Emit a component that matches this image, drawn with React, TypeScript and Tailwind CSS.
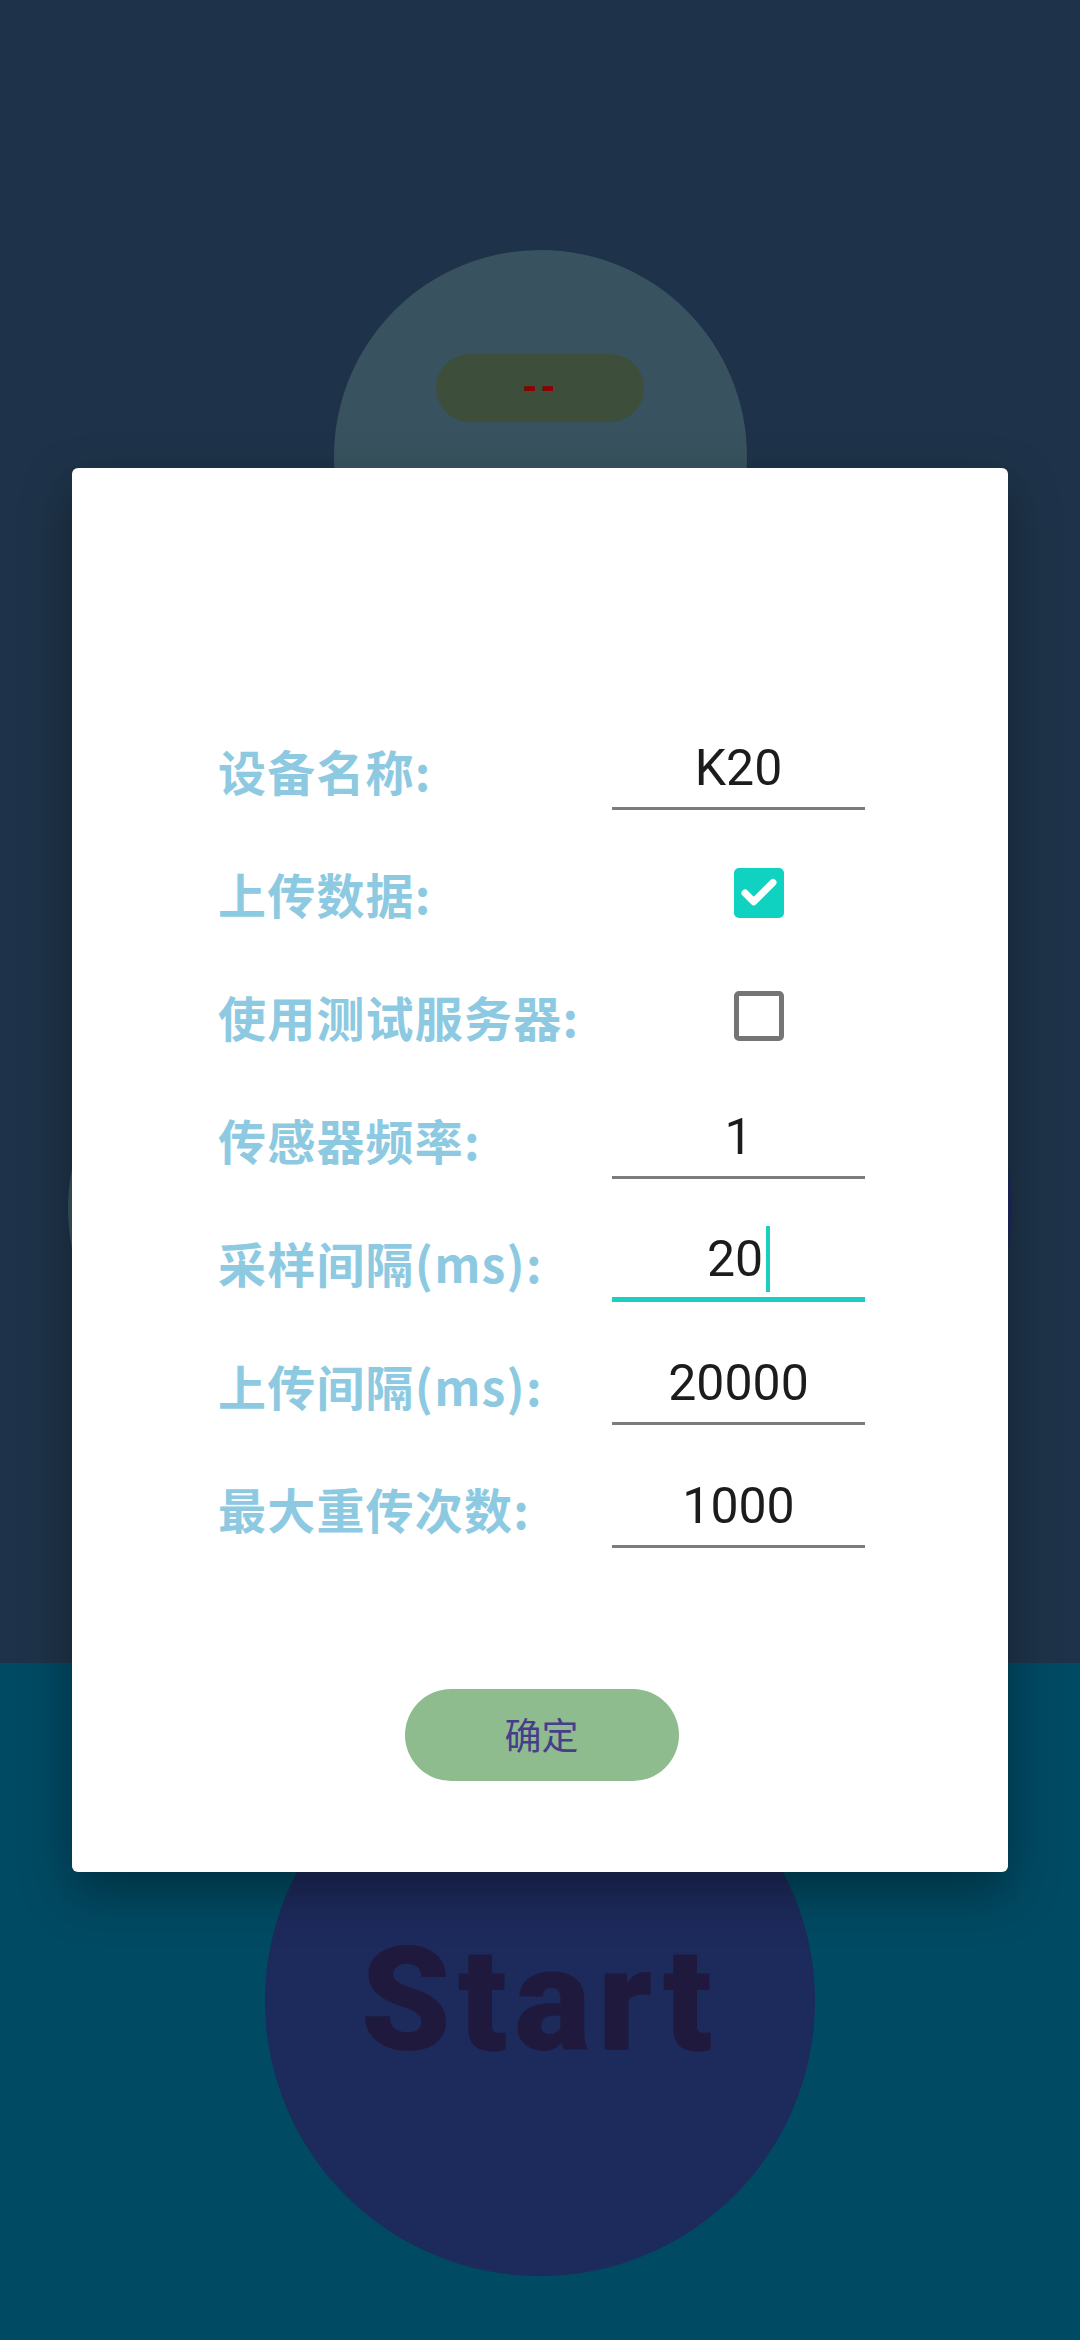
import { Check } from 'lucide-react';

const rows = [
  { label: '设备名称:', kind: 'text', value: 'K20' },
  { label: '上传数据:', kind: 'check', checked: true },
  { label: '使用测试服务器:', kind: 'check', checked: false },
  { label: '传感器频率:', kind: 'text', value: '1' },
  { label: '采样间隔(ms):', kind: 'text', value: '20', focused: true },
  { label: '上传间隔(ms):', kind: 'text', value: '20000' },
  { label: '最大重传次数:', kind: 'text', value: '1000' },
];

function Field({ value, focused }: { value: string; focused?: boolean }) {
  return (
    <div
      className={`h-[80px] w-[253px] flex items-center justify-center ${
        focused ? 'border-b-[5px] border-[#1acfc0]' : 'border-b-[3px] border-[#7c7c7c]'
      }`}
    >
      <span className="text-[50px] leading-none text-[#1c1c1c] font-['Roboto',sans-serif]">{value}</span>
      {focused && <span className="ml-[3px] w-[4px] h-[66px] bg-[#1acfc0]" />}
    </div>
  );
}

function Box({ checked }: { checked?: boolean }) {
  return (
    <div className="w-[253px] pl-[122px] flex items-center">
      {checked ? (
        <div className="w-[50px] h-[50px] rounded-[5px] bg-[#0fd3c0] flex items-center justify-center">
          <Check className="w-[42px] h-[42px] text-white" strokeWidth={4} />
        </div>
      ) : (
        <div className="w-[50px] h-[50px] rounded-[5px] border-[5px] border-[#757575]" />
      )}
    </div>
  );
}

export default function App() {
  return (
    <div className="relative w-[1080px] h-[2340px] overflow-hidden flex flex-col">
      {/* Top area */}
      <div className="h-[1663px] bg-[#1e3349] flex flex-col items-center">
        <div className="mt-[250px] w-[413px] h-[413px] rounded-full bg-[#38535f] flex flex-col items-center pt-[104px]">
          <div className="w-[208px] h-[68px] rounded-full bg-[#3d4e3b] flex items-center justify-center">
            <span className="text-[36px] font-black leading-none tracking-[2px] text-[#8b0000] font-['Roboto',sans-serif]">--</span>
          </div>
        </div>
        <div className="mt-[343px] w-full flex justify-between px-[68px]">
          <div className="w-[405px] h-[405px] rounded-full bg-[#3b5560]" />
          <div className="w-[405px] h-[405px] rounded-full bg-[#1d2a5c]" />
        </div>
      </div>

      {/* Bottom area */}
      <div className="flex-1 bg-[#004a63] flex flex-col items-center">
        <div className="mt-[63px] w-[550px] h-[550px] rounded-full bg-[#1d2a5c] flex items-center justify-center">
          <span className="text-[144px] font-black leading-none tracking-[7px] text-[#1f1a3d] font-['Roboto',sans-serif]">Start</span>
        </div>
      </div>

      {/* Dialog */}
      <div className="absolute left-[72px] top-[468px] w-[936px] bg-white rounded-[6px] shadow-[0_20px_50px_rgba(0,0,0,0.35)] pt-[240px] pb-[91px] pl-[146px] pr-[143px] flex flex-col">
        {rows.map((r) => (
          <div key={r.label} className="h-[123px] flex items-center justify-between">
            <span className="text-[48px] font-semibold leading-none tracking-[1.2px] text-[#8dcae2] font-['Noto_Sans_CJK_SC',sans-serif]">
              {r.label}
            </span>
            {r.kind === 'text' ? <Field value={r.value!} focused={r.focused} /> : <Box checked={r.checked} />}
          </div>
        ))}
        <div className="mt-[120px] flex justify-center">
          <button className="w-[274px] h-[92px] rounded-full bg-[#8fbc8f] text-[37px] text-[#483d8b] font-['Noto_Sans_CJK_SC',sans-serif]">
            确定
          </button>
        </div>
      </div>
    </div>
  );
}
